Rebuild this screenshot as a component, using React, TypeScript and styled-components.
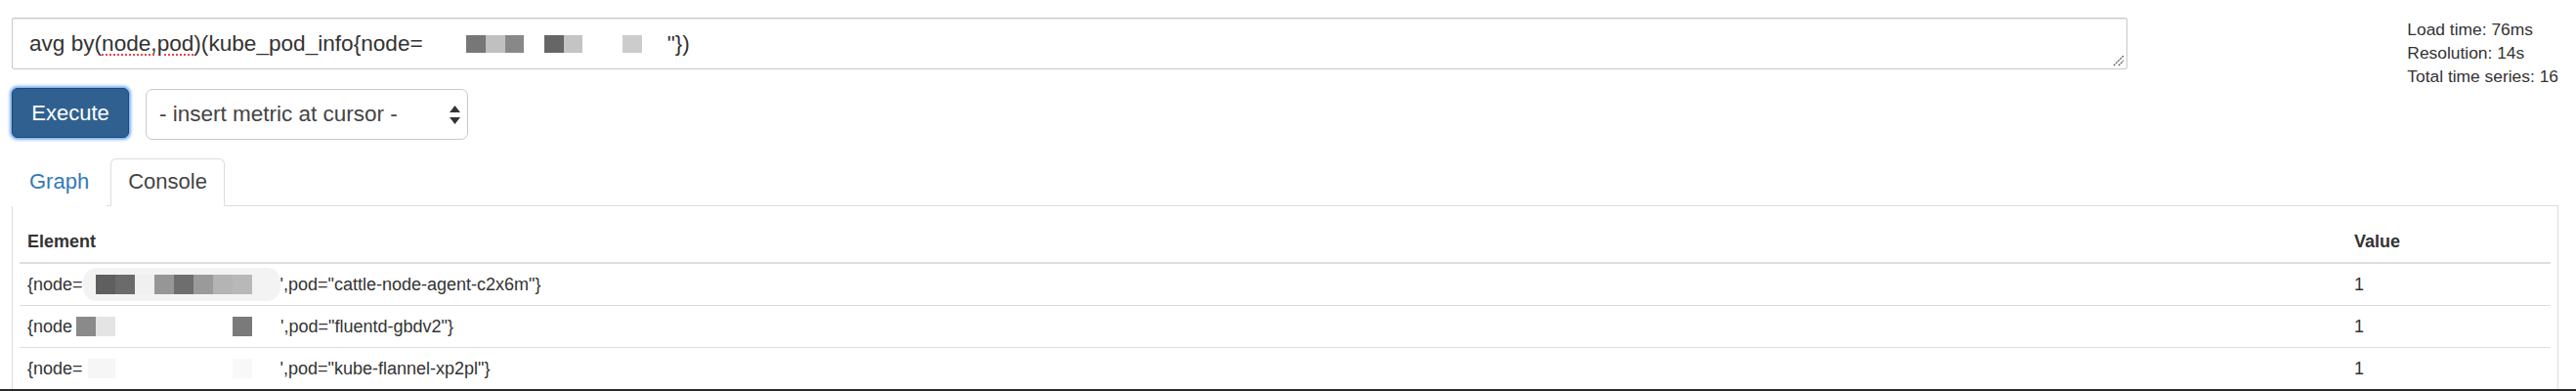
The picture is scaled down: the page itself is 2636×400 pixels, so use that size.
import React from "react";
import styled, { createGlobalStyle } from "styled-components";

const Global = createGlobalStyle`
  html, body { margin: 0; padding: 0; background: #fff; }
  body { font-family: "Liberation Sans", Arial, sans-serif; color: #333; }
`;

const Page = styled.div`
  box-sizing: border-box;
  height: 400px;
  overflow: hidden;
  padding: 18px 18px 0 12px;
  border-bottom: 2px solid #2b2b2b;
`;

const TopRow = styled.div`
  display: flex;
  align-items: flex-start;
`;

const QueryColumn = styled.div`
  width: 2165px;
  display: flex;
  flex-direction: column;
`;

const QueryBox = styled.div`
  position: relative;
  box-sizing: border-box;
  height: 53px;
  border: 1px solid #c8c8c8;
  border-radius: 2px;
  box-shadow: inset 0 1px 1px rgba(0, 0, 0, 0.09);
  padding-left: 17px;
  display: flex;
  align-items: center;
  font-size: 22.6px;
  color: #333;
  white-space: pre;
`;

const Misspelled = styled.span`
  text-decoration: underline dotted #e8454a;
  text-decoration-thickness: 2px;
  text-underline-offset: 4px;
`;

const Redaction = styled.span<{ $w: number; $h: number; $bg?: string; $bleed?: number }>`
  display: inline-flex;
  align-items: center;
  width: ${(p) => p.$w}px;
  height: ${(p) => p.$h}px;
  margin: ${(p) => -(p.$bleed ?? 0)}px 0;
  background: ${(p) => p.$bg || "transparent"};
  border-radius: ${(p) => (p.$bg ? "14px" : "0")};
  flex: none;
`;

const Block = styled.span<{ $c: string; $w?: number; $h: number }>`
  display: inline-block;
  flex: none;
  width: ${(p) => p.$w ?? 20}px;
  height: ${(p) => p.$h}px;
  background: ${(p) => p.$c};
`;

const Grip = styled.svg`
  position: absolute;
  right: 2px;
  bottom: 2px;
`;

const Controls = styled.div`
  display: flex;
  align-items: flex-start;
  gap: 17px;
  margin-top: 19px;
`;

const ExecuteButton = styled.button`
  box-sizing: border-box;
  height: 51px;
  width: 120px;
  border: 1px solid #1d4775;
  border-radius: 6px;
  background: #30608f;
  color: #fff;
  font-family: "Liberation Sans", Arial, sans-serif;
  font-size: 22px;
  box-shadow: 0 0 3px 2px rgba(72, 140, 245, 0.75);
  cursor: pointer;
`;

const MetricSelect = styled.div`
  box-sizing: border-box;
  margin-top: 1px;
  height: 52px;
  width: 330px;
  border: 1px solid #c8c8c8;
  border-radius: 7px;
  background: #fff;
  display: flex;
  align-items: center;
  justify-content: space-between;
  padding: 0 7px 0 13px;
  font-size: 22.5px;
  color: #444;
`;

const Stats = styled.div`
  margin-left: auto;
  margin-top: 0px;
  font-size: 17.4px;
  line-height: 24px;
  color: #333;
`;

const TabList = styled.div`
  display: flex;
  align-items: flex-end;
  gap: 4px;
  margin-top: 19px;
`;

const Tab = styled.div<{ $active?: boolean }>`
  box-sizing: border-box;
  height: 49px;
  padding: 0 17px;
  line-height: 46px;
  font-size: 22px;
  color: ${(p) => (p.$active ? "#444" : "#337ab7")};
  background: #fff;
  border: 1px solid ${(p) => (p.$active ? "#ddd" : "transparent")};
  border-bottom-color: ${(p) => (p.$active ? "#fff" : "transparent")};
  border-radius: 6px 6px 0 0;
  margin-bottom: -1px;
  position: relative;
  z-index: 1;
`;

const Panel = styled.div`
  border: 1px solid #ddd;
  border-bottom: none;
  width: 2606px;
  box-sizing: border-box;
  padding: 15px 7px 0;
`;

const Table = styled.table`
  width: 100%;
  border-collapse: collapse;
  table-layout: fixed;
  font-size: 18px;
  color: #333;
`;

const HeadCell = styled.th<{ $w?: number }>`
  box-sizing: border-box;
  text-align: left;
  font-weight: bold;
  padding: 9px 8px;
  line-height: 24px;
  border-bottom: 2px solid #ddd;
  width: ${(p) => (p.$w ? `${p.$w}px` : "auto")};
`;

const Cell = styled.td`
  padding: 9px 8px;
  height: 42px;
  box-sizing: border-box;
  line-height: 24px;
  border-bottom: 1px solid #ddd;
  white-space: pre;
`;

const ElementText = styled.div`
  display: flex;
  align-items: center;
  height: 24px;
`;

type Blk = { c: string; w?: number };

const Blocks = ({ items, h }: { items: Blk[]; h: number }) => (
  <>
    {items.map((b, i) => (
      <Block key={i} $c={b.c} $w={b.w} $h={h} />
    ))}
  </>
);

const rows: { pre: string; redact: Blk[]; bg?: string; post: string }[] = [
  {
    pre: "{node=",
    bg: "#f3f3f3",
    redact: [
      { c: "transparent", w: 13 },
      { c: "#5f5f5f" },
      { c: "#6b6b6b" },
      { c: "#f0f0f0" },
      { c: "#969696" },
      { c: "#6e6e6e" },
      { c: "#9a9a9a" },
      { c: "#b4b4b4" },
      { c: "#b8b8b8" },
      { c: "transparent", w: 29 },
    ],
    post: `',pod="cattle-node-agent-c2x6m"}`,
  },
  {
    pre: "{node",
    redact: [
      { c: "transparent", w: 4 },
      { c: "#8a8a8a" },
      { c: "#e4e4e4" },
      { c: "transparent", w: 120 },
      { c: "#7a7a7a" },
      { c: "transparent", w: 29 },
    ],
    post: `',pod="fluentd-gbdv2"}`,
  },
  {
    pre: "{node=",
    redact: [
      { c: "transparent", w: 5 },
      { c: "#f6f6f6", w: 28 },
      { c: "transparent", w: 120 },
      { c: "#f8f8f8" },
      { c: "transparent", w: 29 },
    ],
    post: `',pod="kube-flannel-xp2pl"}`,
  },
];

export default function App() {
  return (
    <>
      <Global />
      <Page>
        <TopRow>
          <QueryColumn>
            <QueryBox role="textbox">
              <span>avg by(</span>
              <Misspelled>node,pod</Misspelled>
              <span>)(kube_pod_info{"{"}node=</span>
              <Redaction $w={250} $h={18}>
                <Blocks
                  h={18}
                  items={[
                    { c: "transparent", w: 44 },
                    { c: "#777" },
                    { c: "#c0c0c0" },
                    { c: "#888", w: 19 },
                    { c: "transparent", w: 21 },
                    { c: "#666" },
                    { c: "#c4c4c4", w: 19 },
                    { c: "transparent", w: 41 },
                    { c: "#ccc" },
                    { c: "transparent", w: 26 },
                  ]}
                />
              </Redaction>
              <span>"{"}"})</span>
              <Grip width="12" height="12" viewBox="0 0 12 12">
                <path d="M1 11 L11 1 M6 11 L11 6" stroke="#555" strokeWidth="1.3" strokeDasharray="2 1" />
              </Grip>
            </QueryBox>
            <Controls>
              <ExecuteButton>Execute</ExecuteButton>
              <MetricSelect>
                <span>- insert metric at cursor -</span>
                <svg width="11" height="19" viewBox="0 0 11 19">
                  <path d="M5.5 0 L11 7 L0 7 Z M0 12 L11 12 L5.5 19 Z" fill="#333" />
                </svg>
              </MetricSelect>
            </Controls>
          </QueryColumn>
          <Stats>
            <div>Load time: 76ms</div>
            <div>Resolution: 14s</div>
            <div>Total time series: 16</div>
          </Stats>
        </TopRow>
        <TabList>
          <Tab>Graph</Tab>
          <Tab $active>Console</Tab>
        </TabList>
        <Panel>
          <Table>
            <thead>
              <tr>
                <HeadCell>Element</HeadCell>
                <HeadCell $w={209}>Value</HeadCell>
              </tr>
            </thead>
            <tbody>
              {rows.map((r, i) => (
                <tr key={i}>
                  <Cell>
                    <ElementText>
                      <span>{r.pre}</span>
                      <Redaction
                        $w={r.redact.reduce((s, b) => s + (b.w ?? 20), 0)}
                        $h={34}
                        $bleed={5}
                        $bg={r.bg}
                      >
                        <Blocks h={20} items={r.redact} />
                      </Redaction>
                      <span>{r.post}</span>
                    </ElementText>
                  </Cell>
                  <Cell>1</Cell>
                </tr>
              ))}
            </tbody>
          </Table>
        </Panel>
      </Page>
    </>
  );
}
